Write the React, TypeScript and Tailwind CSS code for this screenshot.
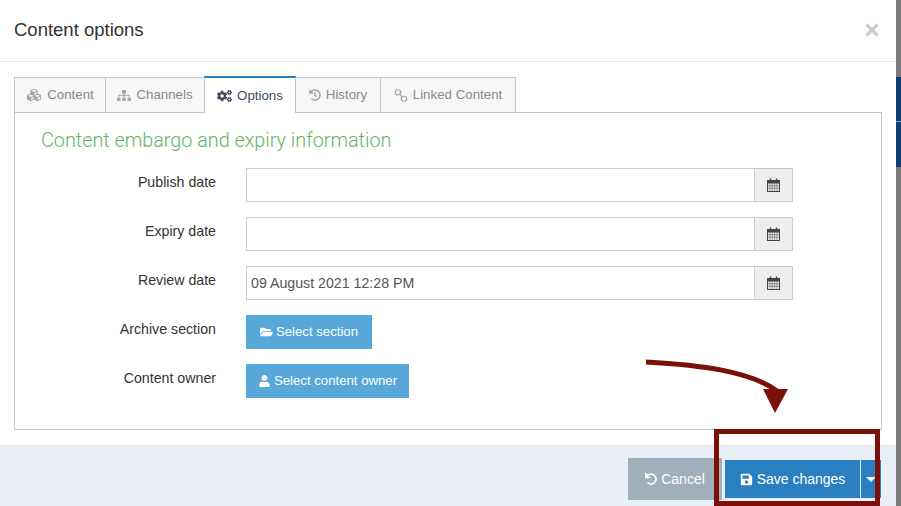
import React from 'react';
import { FaCogs, FaCubes, FaFolderOpen, FaHistory, FaSave, FaSitemap, FaTimes, FaUndo, FaUser } from 'react-icons/fa';

function LinkIcon({ className }: { className?: string }) {
  return (
    <svg className={className} viewBox="0 0 14 14" fill="none" stroke="currentColor" strokeWidth="1.3">
      <rect x="0.8" y="0.8" width="6" height="5.4" rx="2.6" />
      <rect x="7.2" y="7.8" width="6" height="5.4" rx="2.6" />
      <path d="M5 5 L9 9" />
    </svg>
  );
}

function CalendarIcon() {
  return (
    <svg className="h-[14px] w-[13px] text-[#444]" viewBox="0 0 13 14" fill="none" stroke="currentColor" strokeWidth="1">
      <rect x="0.5" y="2.5" width="12" height="11" />
      <path d="M0.5 3H12.5V5H0.5Z" fill="currentColor" />
      <path d="M3 5V13.5M5.3 5V13.5M7.7 5V13.5M10 5V13.5M0.5 7.7H12.5M0.5 10.2H12.5" strokeWidth="0.5" />
      <path d="M3.5 0.5V3M9.5 0.5V3" strokeWidth="1.4" />
    </svg>
  );
}

const tabs = [
  { label: 'Content', icon: FaCubes, width: 'w-[92px]', iconSize: 'h-[14px] w-[16px]' },
  { label: 'Channels', icon: FaSitemap, width: 'w-[100px]', iconSize: 'h-[13px] w-[14px]' },
  { label: 'Options', icon: FaCogs, width: 'w-[92px]', iconSize: 'h-[14px] w-[15px]', active: true },
  { label: 'History', icon: FaHistory, width: 'w-[86px]', iconSize: 'h-[12px] w-[12px]' },
  { label: 'Linked Content', icon: LinkIcon, width: 'w-[136px]', iconSize: 'h-[13px] w-[14px]' },
];

function FormLabel({ children }: { children: React.ReactNode }) {
  return <label className="w-[201px] shrink-0 pt-[6px] text-right text-[14.2px] leading-[16px] text-[#333]">{children}</label>;
}

function DateRow({ label, value }: { label: string; value?: string }) {
  return (
    <div className="flex items-start">
      <FormLabel>{label}</FormLabel>
      <div className="ml-[30px] flex h-[34px] w-[547px]">
        <div className="flex-1 border border-[#ccc] bg-white pl-[4px] text-[14.2px] leading-[32px] text-[#555]">{value}</div>
        <div className="flex w-[38px] items-center justify-center border border-l-0 border-[#ccc] bg-[#eee]">
          <CalendarIcon />
        </div>
      </div>
    </div>
  );
}

function ActionRow({ label, text, icon: Icon, width }: { label: string; text: string; icon: React.ElementType; width: string }) {
  return (
    <div className="flex items-start">
      <FormLabel>{label}</FormLabel>
      <button className={`ml-[30px] flex h-[34px] ${width} items-center justify-center gap-[3px] bg-[#57a8d9] text-[13.2px] text-white`}>
        <Icon className="h-[12px] w-[13px]" />
        {text}
      </button>
    </div>
  );
}

export default function App() {
  return (
    <div className="relative flex h-[506px] w-[901px] overflow-hidden bg-white font-['Liberation_Sans',sans-serif]">
      <div className="flex h-full w-[896px] flex-col">
        <div className="flex h-[62px] shrink-0 items-center justify-between border-b border-[#e5e5e5] pb-[2px] pl-[14px] pr-[16px]">
          <h4 className="text-[18.5px] text-[#333]">Content options</h4>
          <FaTimes className="h-[18px] w-[16px] text-[#ccc]" />
        </div>
        <div className="flex-1 pl-[14px] pt-[15px]">
          <div className="flex h-[35px] items-end">
            {tabs.map((tab) => (
              <div
                key={tab.label}
                className={
                  tab.active
                    ? `relative z-10 -mb-px -ml-px flex h-[37px] ${tab.width} items-center justify-center gap-[5px] border-x border-t-2 border-x-[#b8c9d9] border-t-[#2a7fc0] bg-white text-[13.3px] text-[#3c4b5f]`
                    : `-ml-px flex h-[35px] ${tab.width} items-center justify-center gap-[5px] border border-b-0 border-[#b8c9d9] bg-[#f7f7f7] text-[13.3px] text-[#8a8a8a] first:ml-0`
                }
              >
                <tab.icon className={`${tab.iconSize} ${tab.active ? '' : 'text-[#a5a5a5]'}`} />
                {tab.label}
              </div>
            ))}
          </div>
          <div className="h-[318px] w-[868px] border border-[#b8c9d9] bg-white pt-[16px]">
            <h3 className="pl-[26px] font-['Roboto',sans-serif] text-[19.8px] leading-[24px] font-light text-[#62b562]">Content embargo and expiry information</h3>
            <div className="mt-[15px] flex flex-col gap-[15px]">
              <DateRow label="Publish date" />
              <DateRow label="Expiry date" />
              <DateRow label="Review date" value="09 August 2021 12:28 PM" />
              <ActionRow label="Archive section" text="Select section" icon={FaFolderOpen} width="w-[126px]" />
              <ActionRow label="Content owner" text="Select content owner" icon={FaUser} width="w-[163px]" />
            </div>
          </div>
        </div>
        <div className="flex h-[61px] shrink-0 items-start justify-end border-t border-[#e2e6ea] bg-[#e9eef7] pt-[12px] pr-[15px]">
          <button className="flex h-[42px] w-[94px] items-center justify-center gap-[4px] bg-[#a0b0ba] text-[14px] text-white">
            <FaUndo className="h-[12px] w-[12px]" />
            Cancel
          </button>
          <div className="ml-[3px] mt-[2px] flex h-[38px]">
            <button className="flex w-[135px] items-center justify-center gap-[4px] bg-[#2a7fc0] text-[14px] text-white">
              <FaSave className="h-[13px] w-[13px]" />
              Save changes
            </button>
            <div className="ml-px flex w-[20px] items-center justify-center bg-[#2a7fc0]">
              <div className="h-0 w-0 border-x-[5px] border-t-[5px] border-x-transparent border-t-white" />
            </div>
          </div>
        </div>
      </div>
      {/* page behind the modal */}
      <div className="flex w-[5px] flex-col bg-[#7b7b7b]">
        <div className="mt-[77px] h-[90px] bg-[#0f3f75]">
          <div className="mt-[44px] h-px bg-[#7f9ab8]" />
        </div>
      </div>
      {/* annotation */}
      <svg className="pointer-events-none absolute left-0 top-0" width="901" height="506">
        <path d="M646 362 C700 365 750 371 777 391" fill="none" stroke="#7a1009" strokeWidth="5" />
        <polygon points="763,389 788,389 775,413" fill="#7a1009" />
      </svg>
      <div className="pointer-events-none absolute left-[714px] top-[429px] h-[77px] w-[166px] border-[5px] border-[#7a1009]" />
    </div>
  );
}
